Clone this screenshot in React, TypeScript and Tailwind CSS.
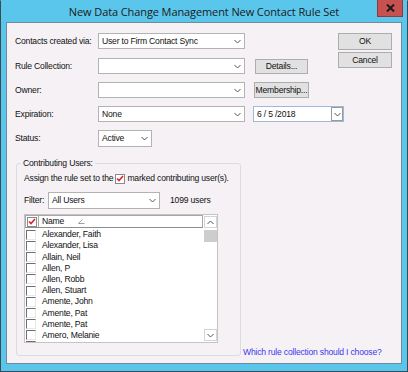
import React from "react";

const F = "font-['Liberation_Sans',Arial,sans-serif] text-[8.6px] tracking-[-0.2px] text-[#111] whitespace-nowrap";

function Chevron({ up = false }: { up?: boolean }) {
  return (
    <svg width="7" height="5" viewBox="0 0 7 5" className="shrink-0">
      <polyline
        points={up ? "0.5,4 3.5,1 6.5,4" : "0.5,1 3.5,4 6.5,1"}
        fill="none"
        stroke="#555"
        strokeWidth="1"
      />
    </svg>
  );
}

function Select({ className, value }: { className: string; value?: string }) {
  return (
    <div className={`flex items-center bg-white border border-[#b3b3b3] h-[16px] pl-[3px] pr-[3px] shrink-0 ${className}`}>
      <span className="flex-1 leading-none">{value}</span>
      <Chevron />
    </div>
  );
}

function Btn({ className, children }: { className: string; children: React.ReactNode }) {
  return (
    <div className={`flex items-center justify-center bg-[#e1e1e1] border border-[#adadad] leading-none shrink-0 ${className}`}>
      {children}
    </div>
  );
}

function RedCheck() {
  return (
    <div className="w-[10px] h-[10px] border border-[#8a8a8a] bg-white flex items-center justify-center shrink-0">
      <svg width="8" height="7" viewBox="0 0 8 7">
        <polyline points="1,3.5 3,5.5 7,1" fill="none" stroke="#e0202a" strokeWidth="1.6" />
      </svg>
    </div>
  );
}

const users = [
  "Alexander, Faith",
  "Alexander, Lisa",
  "Allain, Neil",
  "Allen, P",
  "Allen, Robb",
  "Allen, Stuart",
  "Amente, John",
  "Amente, Pat",
  "Amente, Pat",
  "Amero, Melanie",
  "Andrade, Michael",
];

export default function App() {
  return (
    <div className={`w-[408px] h-[372px] bg-[#5bc6ec] border border-[#3e4a50] border-t-[#5bc6ec] relative flex flex-col ${F}`}>
      {/* Title bar */}
      <div className="h-[21px] flex items-center justify-center">
        <span className="font-['Open_Sans','Liberation_Sans',sans-serif] text-[11px] text-[#1a1a1a] tracking-[-0.1px] pt-[2px]">
          New Data Change Management New Contact Rule Set
        </span>
      </div>
      <div className="absolute top-[-1px] right-[4px] w-[26px] h-[17px] bg-[#c75050] border border-[#8f3b3b] border-t-0 flex items-center justify-center">
        <svg width="9" height="8" viewBox="0 0 9 8">
          <path d="M1 0.5 L8 7.5 M8 0.5 L1 7.5" stroke="#1a1a1a" strokeWidth="2" />
        </svg>
      </div>

      {/* Client */}
      <div className="ml-[5px] w-[396px] h-[342px] border border-[#6e8c9a] bg-[#f5f1f5] flex flex-col pl-[8px] pt-[10px]">
        <div className="flex">
          {/* Form */}
          <div className="w-[322px] flex flex-col">
            <div className="flex items-center h-[16px]">
              <span className="w-[83px] shrink-0">Contacts created via:</span>
              <Select className="w-[147px]" value="User to Firm Contact Sync" />
            </div>
            <div className="flex items-center h-[16px] mt-[9px]">
              <span className="w-[83px] shrink-0">Rule Collection:</span>
              <Select className="w-[147px]" />
              <Btn className="ml-[10px] w-[53px] h-[15px]">Details...</Btn>
            </div>
            <div className="flex items-center h-[16px] mt-[8px]">
              <span className="w-[83px] shrink-0">Owner:</span>
              <Select className="w-[147px]" />
              <Btn className="ml-[9px] w-[55px] h-[16px]">Membership...</Btn>
            </div>
            <div className="flex items-center h-[16px] mt-[8px]">
              <span className="w-[83px] shrink-0">Expiration:</span>
              <Select className="w-[147px]" value="None" />
              <div className="ml-[8px] w-[91px] h-[16px] shrink-0 bg-white border border-[#9fb9d6] flex items-center pl-[3px]">
                <span className="flex-1 leading-none">6 / 5 /2018</span>
                <div className="w-[12px] h-[14px] border border-[#9a9a9a] bg-white flex items-center justify-center">
                  <Chevron />
                </div>
              </div>
            </div>
            <div className="flex items-center h-[17px] mt-[8px]">
              <span className="w-[83px] shrink-0">Status:</span>
              <Select className="w-[54px] h-[17px]" value="Active" />
            </div>
          </div>
          {/* Buttons */}
          <div className="ml-[1px] flex flex-col w-[54px]">
            <Btn className="h-[17px] border-[#3c7fb1]">OK</Btn>
            <Btn className="h-[16px] mt-[2px]">Cancel</Btn>
          </div>
        </div>

        <div className="flex items-end mt-[16px]">
          {/* Group box */}
          <div className="ml-[1px] w-[225px] h-[193px] shrink-0 border border-[#d9dde0] rounded-[3px] relative pl-[7px] pt-[9px] flex flex-col">
            <span className="absolute top-[-7px] left-[4px] px-[2px] bg-[#f5f1f5] leading-[12px]">Contributing Users:</span>
            <div className="flex items-center h-[11px] gap-[2px]">
              <span>Assign the rule set to the</span>
              <RedCheck />
              <span>marked contributing user(s).</span>
            </div>
            <div className="flex items-center h-[17px] mt-[8px]">
              <span className="w-[24px] shrink-0">Filter:</span>
              <Select className="w-[112px] h-[17px]" value="All Users" />
              <span className="ml-[10px]">1099 users</span>
            </div>
            <div className="mt-[5px] w-[194px] h-[129px] border border-[#c4c4c4] bg-white flex overflow-hidden">
              <div className="w-[179px] flex flex-col">
                <div className="h-[13px] flex border border-[#a8a8a8] border-b-[#8c8c8c] bg-white shrink-0">
                  <div className="w-[13px] border-r border-[#a8a8a8] flex items-center justify-center">
                    <RedCheck />
                  </div>
                  <div className="flex items-center pl-[3px] leading-none">
                    <span>Name</span>
                    <svg width="7" height="5" viewBox="0 0 7 5" className="ml-[14px]">
                      <polyline points="4.5,0.5 0.5,4.5 6.5,4.5" fill="none" stroke="#888" strokeWidth="0.8" />
                    </svg>
                  </div>
                </div>
                <div className="flex flex-col pt-[1px]">
                  {users.map((u, i) => (
                    <div key={i} className="h-[11.2px] flex items-center shrink-0">
                      <div className="ml-[1px] w-[10px] h-[10px] border-t border-l border-[#6e6e6e] border-r border-b border-r-[#e8e8e8] border-b-[#e8e8e8] bg-white shrink-0" />
                      <span className="ml-[6px] leading-none">{u}</span>
                    </div>
                  ))}
                </div>
              </div>
              {/* Scrollbar */}
              <div className="ml-[1px] w-[13px] h-full flex flex-col pt-[1px] pb-[1px]">
                <div className="h-[12px] border border-[#d4d4d4] bg-white flex items-center justify-center shrink-0">
                  <Chevron up />
                </div>
                <div className="mt-[2px] h-[12px] bg-[#cdcdcd] shrink-0" />
                <div className="flex-1 bg-white" />
                <div className="h-[12px] border border-[#d4d4d4] bg-white flex items-center justify-center shrink-0">
                  <Chevron />
                </div>
              </div>
            </div>
          </div>
          <span className="ml-[2px] mb-[-3px] text-[#3a3af0]">Which rule collection should I choose?</span>
        </div>
      </div>
    </div>
  );
}
